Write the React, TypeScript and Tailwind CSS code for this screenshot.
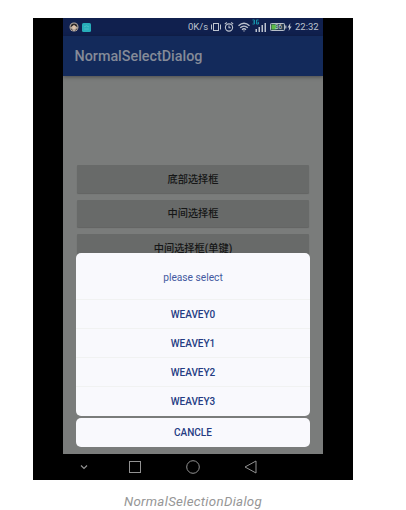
import React from "react";

const actions = ["底部选择框", "中间选择框", "中间选择框(单键)"];
const options = ["WEAVEY0", "WEAVEY1", "WEAVEY2", "WEAVEY3"];

function VibrateIcon() {
  return (
    <svg className="ml-[2px] h-[10px] w-[10px] shrink-0" viewBox="0 0 10 10" fill="none" stroke="currentColor">
      <rect x="2.500" y="1.500" width="5" height="7" />
      <path d="M.5 2.500v5M9.500 2.500v5" />
    </svg>
  );
}

function AlarmIcon() {
  return (
    <svg className="ml-[3px] h-[10px] w-[10px] shrink-0" viewBox="0 0 9 10" fill="none" stroke="currentColor" strokeWidth="1.100">
      <circle cx="4.500" cy="5.500" r="3.600" />
      <path d="M.3 2.200L2.300.5M8.700 2.200L6.700.5M4.500 3.500v2.200H6.200" />
    </svg>
  );
}

function WifiIcon() {
  return (
    <svg className="ml-1 h-[10px] w-[12px] shrink-0" viewBox="0 0 12 10" fill="none" stroke="currentColor" strokeWidth="1.350">
      <path d="M.5 3.700Q6-1.200 11.500 3.700M2.200 5.800Q6 2.400 9.800 5.800M4 7.700Q6 5.900 8 7.700" />
      <circle cx="6" cy="8.900" r=".7" fill="currentColor" stroke="none" />
    </svg>
  );
}

function SignalIcon() {
  return (
    <svg className="ml-[2px] h-[14px] w-[15px] shrink-0 -translate-y-[1px]" viewBox="0 0 15 14" fill="currentColor">
      <path d="M3.500 10H5v3H3.500zM6.500 8H8v5H6.500zM9.500 6H11v7H9.500zM12.500 4H14v9h-1.500z" />
      <path d="M.5 1h2v4h-2M1 3h1.500M6.500 1h-2v4h2V3.200h-1" fill="none" stroke="#168fa8" />
    </svg>
  );
}

function BatteryIcon() {
  return (
    <svg className="ml-[3px] h-[10px] w-[22px] shrink-0" viewBox="0 0 22 10">
      <rect x=".5" y="1.500" width="14" height="7" rx=".8" fill="#263d54" stroke="#b7bec8" />
      <rect x="1.500" y="2.500" width="5" height="5" fill="#5dba45" />
      <path d="M15.800 3.500v3" stroke="#b7bec8" strokeWidth="1.200" />
      <text x="5" y="7.200" fontSize="6.300" fontFamily="Roboto, sans-serif" fill="#ccd5d8">36</text>
      <path d="M20.300 1L17.600 5.500h1.500L18.700 9l2.900-4.500H20z" fill="#c0c6d0" />
    </svg>
  );
}

function StatusBar() {
  return (
    <div className="flex h-[18px] shrink-0 items-center bg-[#10204e] pl-[6px] text-[#bcc2ce]">
      <svg className="h-[10px] w-[10px]" viewBox="0 0 10 10">
        <circle cx="5" cy="5" r="4.500" fill="#b5aaa2" />
        <path d="M1.500 5.500Q1.500 1.500 5 1.500T8.500 5.500L7.200 4.500 5 3 2.800 4.500z" fill="#2e2929" />
        <path d="M3.200 4.500L5 3.300 6.800 4.500 6.300 7H3.700z" fill="#dfc2aa" />
        <path d="M2 6.500L3.500 8.500M8 6.500L6.500 8.500" stroke="#47362f" fill="none" />
      </svg>
      <svg className="ml-[3px] h-[9px] w-[9px]" viewBox="0 0 9 9">
        <rect width="9" height="9" rx="1.500" fill="#27adb9" />
        <path d="M2 4Q4.500 1.500 7 4M2.200 6h4.600" stroke="#54c3cc" strokeWidth=".8" fill="none" />
      </svg>
      <div className="ml-auto flex items-center pr-[4px]">
        <span className="w-[21px] whitespace-nowrap text-[9.500px] leading-none">0K/s</span>
        <VibrateIcon />
        <AlarmIcon />
        <WifiIcon />
        <SignalIcon />
        <BatteryIcon />
        <span className="ml-[3px] w-[24px] whitespace-nowrap text-[9.500px] leading-none">22:32</span>
      </div>
    </div>
  );
}

function SelectionDialog() {
  return (
    <div className="absolute inset-x-[13px] bottom-[7px] text-center text-[10px] font-medium text-[#253c83]">
      <div className="overflow-hidden rounded-[5px] bg-[#f9f9fd]">
        <div className="flex h-[46px] items-center justify-center pt-[3px] text-[10.200px] font-normal text-[#4459a0]">please select</div>
        {options.map((label) => (
          <div key={label} className="flex h-[29px] items-center justify-center border-t border-[#f1f2f2]">{label}</div>
        ))}
        <div className="h-px" />
      </div>
      <div className="mt-[2px] flex h-[29px] items-center justify-center rounded-[5px] bg-[#f9f9fd]">CANCLE</div>
    </div>
  );
}

function NavigationBar() {
  return (
    <div className="flex h-[26px] items-center pl-[47px] text-[#929292]">
      <svg className="h-[8px] w-[8px]" viewBox="0 0 8 8" fill="none" stroke="currentColor" strokeWidth="1.200">
        <path d="M1 2.500l3 3 3-3" />
      </svg>
      <svg className="ml-[41px] h-[12px] w-[12px]" viewBox="0 0 12 12" fill="none" stroke="currentColor">
        <rect x=".5" y=".5" width="11" height="11" />
      </svg>
      <svg className="ml-[45px] h-[14px] w-[14px]" viewBox="0 0 14 14" fill="none" stroke="currentColor">
        <circle cx="7" cy="7" r="6.300" />
      </svg>
      <svg className="ml-[44px] h-[14px] w-[13px]" viewBox="0 0 13 14" fill="none" stroke="currentColor">
        <path d="M12 1v12L1 7z" />
      </svg>
    </div>
  );
}

export default function App() {
  return (
    <main className="h-[510px] w-[406px] overflow-hidden bg-white pl-[33px] pt-[18px] font-['Roboto','Noto_Sans_CJK_SC',sans-serif]">
      <div className="h-[462px] w-[320px] bg-black">
        <div className="relative ml-[30px] flex h-[436px] w-[260px] flex-col overflow-hidden bg-[#7a7c7b]">
          <StatusBar />
          <header className="flex h-[40px] shrink-0 items-center bg-[#132a5b] pl-[11.500px] pt-px text-[14.350px] font-medium text-[#858b98] shadow-[0_1px_4px_rgba(0,0,0,0.4)]">NormalSelectDialog</header>
          <div className="flex flex-col gap-[7px] px-[14px] pt-[89px]">
            {actions.map((label) => (
              <div key={label} className="flex h-[27.500px] shrink-0 items-center justify-center rounded-[1px] bg-[#686a69] pt-px text-[10.200px] font-medium text-[#151616] shadow-[0_1px_1px_rgba(0,0,0,0.2)]">{label}</div>
            ))}
          </div>
          <SelectionDialog />
        </div>
        <NavigationBar />
      </div>
      <p className="mt-[13px] w-[320px] text-center text-[13.300px] leading-[18px] tracking-[0.300px] text-[#969696] italic">NormalSelectionDialog</p>
    </main>
  );
}
